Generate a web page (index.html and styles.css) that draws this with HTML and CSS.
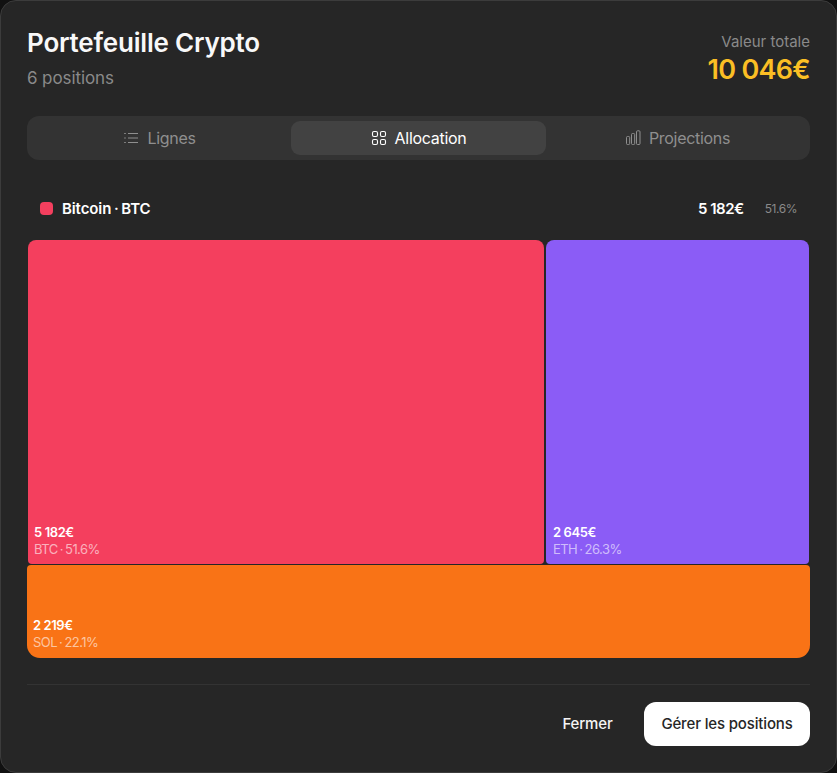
FILE: index.html

```html
<!DOCTYPE html>
<html lang="fr">
<head>
    <meta charset="UTF-8">
    <meta name="viewport" content="width=device-width, initial-scale=1.0">
    <title>Portefeuille Crypto</title>
    <link rel="stylesheet" href="styles.css">
</head>
<body>

<div class="modal">
    <header class="modal-header">
        <div>
            <h1>Portefeuille Crypto</h1>
            <p class="count">6 positions</p>
        </div>
        <div class="total">
            <p class="total-label">Valeur totale</p>
            <p class="total-value">10 046€</p>
        </div>
    </header>

    <nav class="tabs">
        <button class="tab">
            <svg width="16" height="16" viewBox="0 0 16 16" fill="none" stroke="currentColor" stroke-width="1">
                <path d="M5 3.5H15M5 8H15M5 12.5H15M1.2 3.5h1.6M1.2 8h1.6M1.2 12.5h1.6"/>
            </svg>
            Lignes
        </button>
        <button class="tab active">
            <svg width="16" height="16" viewBox="0 0 16 16" fill="none" stroke="currentColor" stroke-width="1.1">
                <rect x="1.5" y="1.5" width="5" height="5" rx="1.5"/>
                <rect x="9.5" y="1.5" width="5" height="5" rx="1.5"/>
                <rect x="1.5" y="9.5" width="5" height="5" rx="1.5"/>
                <rect x="9.5" y="9.5" width="5" height="5" rx="1.5"/>
            </svg>
            Allocation
        </button>
        <button class="tab">
            <svg width="16" height="16" viewBox="0 0 16 16" fill="none" stroke="currentColor" stroke-width="1">
                <rect x="1.5" y="6.5" width="3.2" height="8" rx="1"/>
                <rect x="6.5" y="3.5" width="3.2" height="11" rx="1"/>
                <rect x="11.5" y="0.8" width="3.5" height="13.7" rx="1"/>
            </svg>
            Projections
        </button>
    </nav>

    <div class="legend">
        <div class="legend-name">
            <span class="swatch"></span>
            <span>Bitcoin · BTC</span>
        </div>
        <div class="legend-values">
            <span class="legend-amount">5 182€</span>
            <span class="legend-pct">51.6%</span>
        </div>
    </div>

    <div class="treemap">
        <div class="treemap-row">
            <div class="tile tile-btc">
                <span class="tile-amount">5 182€</span>
                <span class="tile-meta">BTC · 51.6%</span>
            </div>
            <div class="tile tile-eth">
                <span class="tile-amount">2 645€</span>
                <span class="tile-meta">ETH · 26.3%</span>
            </div>
        </div>
        <div class="tile tile-sol">
            <span class="tile-amount">2 219€</span>
            <span class="tile-meta">SOL · 22.1%</span>
        </div>
    </div>

    <footer class="modal-footer">
        <button class="btn-ghost">Fermer</button>
        <button class="btn-primary">Gérer les positions</button>
    </footer>
</div>

</body>
</html>
```

FILE: styles.css

```css
* {
    box-sizing: border-box;
}

html, body {
    height: 100%;
}

body {
    margin: 0;
    background-color: #111;
    font-family: Inter, "Liberation Sans", sans-serif;
    color: #fff;
}

p, h1 {
    margin: 0;
}

.modal {
    height: 773px;
    padding: 26px 26px 0;
    background-color: #262626;
    border: 1px solid #3c3c3c;
    border-radius: 16px;
}

.modal-header {
    display: flex;
    justify-content: space-between;
    height: 89px;
}

h1 {
    margin-top: 1px;
    font-size: 26px;
    line-height: 30px;
    font-weight: 600;
    letter-spacing: -0.2px;
    color: #f8f8f8;
}

.count {
    margin-top: 8px;
    font-size: 17px;
    line-height: 24px;
    letter-spacing: -0.1px;
    color: #8a8a8a;
}

.total {
    text-align: right;
}

.total-label {
    margin-top: 5px;
    font-size: 15px;
    line-height: 20px;
    color: #8a8a8a;
}

.total-value {
    margin-top: 2px;
    font-size: 27px;
    line-height: 32px;
    font-weight: 600;
    letter-spacing: -0.7px;
    color: #fbbf24;
}

.tabs {
    display: flex;
    gap: 4px;
    height: 44px;
    padding: 5px;
    background-color: #333;
    border-radius: 12px;
}

.tab {
    flex: 1;
    display: flex;
    align-items: center;
    justify-content: center;
    gap: 8px;
    padding: 0;
    border: none;
    border-radius: 9px;
    background: none;
    font-family: inherit;
    font-size: 16px;
    letter-spacing: -0.3px;
    color: #8f8f8f;
}

.tab.active {
    background-color: #424242;
    color: #fff;
}

.legend {
    display: flex;
    align-items: center;
    justify-content: space-between;
    height: 36px;
    margin-top: 30px;
    margin-bottom: 14px;
    padding: 0 13px;
}

.legend-name {
    display: flex;
    align-items: center;
    gap: 9px;
    font-size: 15px;
    font-weight: 600;
    letter-spacing: -0.1px;
    word-spacing: -1px;
}

.swatch {
    width: 13px;
    height: 13px;
    border-radius: 4px;
    background-color: #f43f5e;
}

.legend-values {
    display: flex;
    align-items: center;
    gap: 21px;
}

.legend-amount {
    font-size: 15px;
    font-weight: 600;
    letter-spacing: -0.5px;
}

.legend-pct {
    font-size: 12px;
    letter-spacing: -0.45px;
    color: #8a8a8a;
}

.treemap {
    display: flex;
    flex-direction: column;
    gap: 1px;
    height: 418px;
}

.treemap-row {
    display: flex;
    gap: 2px;
    height: 324px;
    padding: 0 1px;
}

.tile {
    display: flex;
    flex-direction: column;
    justify-content: flex-end;
    padding: 6px;
    border-radius: 8px 8px 4px 4px;
    font-size: 13px;
}

.tile-btc {
    width: 516px;
    background-color: #f43f5e;
}

.tile-eth {
    flex: 1;
    padding-left: 7px;
    background-color: #8b5cf6;
}

.tile-sol {
    flex: 1;
    padding-bottom: 7px;
    border-radius: 4px 4px 13px 13px;
    background-color: #f97316;
}

.tile-amount {
    font-weight: 600;
    line-height: 16px;
    letter-spacing: -0.4px;
}

.tile-meta {
    font-size: 13px;
    line-height: 18px;
    letter-spacing: -0.55px;
    word-spacing: -1px;
    color: rgba(255, 255, 255, 0.6);
}

.modal-footer {
    display: flex;
    align-items: center;
    justify-content: flex-end;
    gap: 14px;
    height: 62px;
    margin-top: 26px;
    padding-top: 17px;
    border-top: 1px solid #333;
}

.modal-footer button {
    height: 44px;
    padding: 0 0 2px;
    border: none;
    border-radius: 12px;
    font-family: inherit;
    font-size: 15px;
    font-weight: 500;
    letter-spacing: -0.15px;
}

.btn-ghost {
    width: 85px;
    background: none;
    color: #f5f5f5;
}

.btn-primary {
    width: 166px;
    background-color: #fff;
    color: #262626;
}
```
